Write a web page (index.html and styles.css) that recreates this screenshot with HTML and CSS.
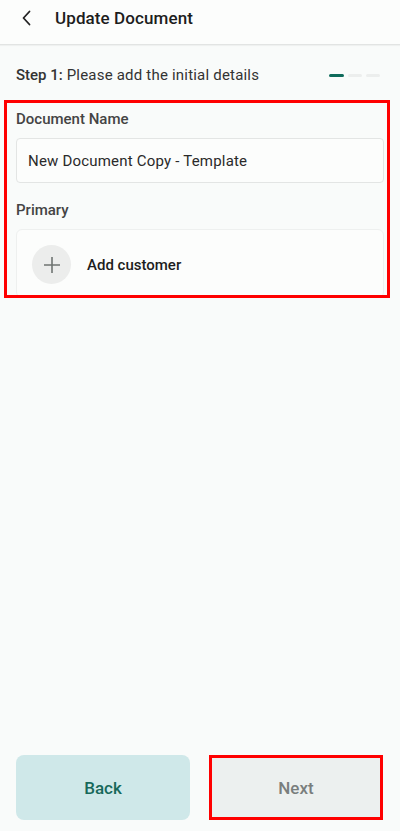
FILE: index.html
```html
<!DOCTYPE html>
<html lang="en">
<head>
<meta charset="utf-8">
<title>Update Document</title>
<link rel="stylesheet" href="styles.css">
</head>
<body>
<div class="screen">
  <header class="topbar">
    <button class="back-btn" aria-label="Back">
      <svg width="12" height="16" viewBox="0 0 12 16"><path d="M8.5 1.5 L2.5 8 L8.5 14.5" fill="none" stroke="#222" stroke-width="1.8" stroke-linecap="round" stroke-linejoin="round"/></svg>
    </button>
    <h1 class="title">Update Document</h1>
  </header>

  <div class="step-row">
    <p class="step-text"><span class="step-num">Step 1:</span> Please add the initial details</p>
    <div class="progress">
      <span class="dash active"></span>
      <span class="dash"></span>
      <span class="dash"></span>
    </div>
  </div>

  <section class="form highlight">
    <label class="field-label">Document Name</label>
    <div class="input">New Document Copy - Template</div>
    <label class="field-label primary-label">Primary</label>
    <div class="customer-card">
      <span class="plus-circle">
        <svg width="20" height="20" viewBox="0 0 20 20"><path d="M10 2 V18 M2 10 H18" stroke="#6f7472" stroke-width="1.6"/></svg>
      </span>
      <span class="add-text">Add customer</span>
    </div>
  </section>

  <div class="spacer"></div>

  <footer class="actions">
    <button class="btn btn-back">Back</button>
    <button class="btn btn-next">Next</button>
  </footer>
</div>
</body>
</html>
```

FILE: styles.css
```css
* { box-sizing: border-box; }

html, body {
  margin: 0;
  padding: 0;
  background: #f9fbfa;
  font-family: Roboto, "Liberation Sans", sans-serif;
  color: #222;
}

.screen {
  width: 400px;
  height: 831px;
  display: flex;
  flex-direction: column;
  position: relative;
}

.topbar {
  height: 45px;
  display: flex;
  align-items: center;
  background: #fcfdfc;
  border-bottom: 1px solid #e2e4e3;
  box-shadow: 0 1px 1px rgba(0,0,0,0.04);
  padding-bottom: 9px;
}

.back-btn {
  border: 0;
  background: none;
  padding: 0;
  margin-left: 21px;
  width: 12px;
  height: 16px;
  display: flex;
}

.title {
  margin: 0 0 0 22px;
  font-size: 17px;
  font-weight: 500;
  letter-spacing: 0.1px;
  color: #1d1d1d;
}

.step-row {
  display: flex;
  align-items: center;
  justify-content: space-between;
  padding: 12px 20px 0 16px;
  height: 48px;
}

.step-text {
  margin: 0;
  font-size: 15px;
  letter-spacing: 0.2px;
  color: #333;
}

.step-num { font-weight: 500; letter-spacing: 0; }

.progress {
  display: flex;
  gap: 4px;
}

.dash {
  width: 14px;
  height: 3px;
  border-radius: 2px;
  background: #eceeed;
}

.dash.active {
  width: 15px;
  background: #0f6b5b;
}

.form {
  margin: 7px 10px 0 4px;
  padding: 9px 0 0 12px;
  height: 198px;
  display: flex;
  flex-direction: column;
  position: relative;
}

.highlight::after {
  content: "";
  position: absolute;
  inset: 0;
  border: 3px solid #f00;
  pointer-events: none;
}

.field-label {
  font-size: 15px;
  font-weight: 500;
  color: #444;
  line-height: 20px;
}

.input {
  margin-top: 9px;
  width: 368px;
  height: 47px;
  border: 1px solid #e3e5e4;
  border-radius: 4px;
  background: #fcfdfc;
  display: flex;
  align-items: center;
  padding-left: 11px;
  font-size: 15px;
  letter-spacing: 0.2px;
  color: #2a2a2a;
}

.primary-label { margin-top: 17px; }

.customer-card {
  margin-top: 9px;
  width: 368px;
  height: 72px;
  border: 1px solid #eef0ef;
  border-radius: 6px;
  background: #fcfdfc;
  display: flex;
  align-items: center;
  padding: 2px 0 0 15px;
}

.plus-circle {
  width: 39px;
  height: 39px;
  border-radius: 50%;
  background: #ecedec;
  display: flex;
  align-items: center;
  justify-content: center;
}

.add-text {
  margin-left: 16px;
  font-size: 15px;
  font-weight: 500;
  color: #1d1d1d;
}

.spacer { flex: 1; }

.actions {
  display: flex;
  justify-content: space-between;
  padding: 0 17px 11px 16px;
}

.btn {
  border: 0;
  height: 65px;
  font-family: Roboto, "Liberation Sans", sans-serif;
  font-size: 17px;
  font-weight: 500;
}

.btn-back {
  width: 174px;
  border-radius: 8px;
  background: #cfe8e9;
  color: #17685a;
}

.btn-next {
  width: 174px;
  background: #ecf0ef;
  color: #797e7d;
  outline: 3px solid #f00;
  outline-offset: -3px;
}
```
